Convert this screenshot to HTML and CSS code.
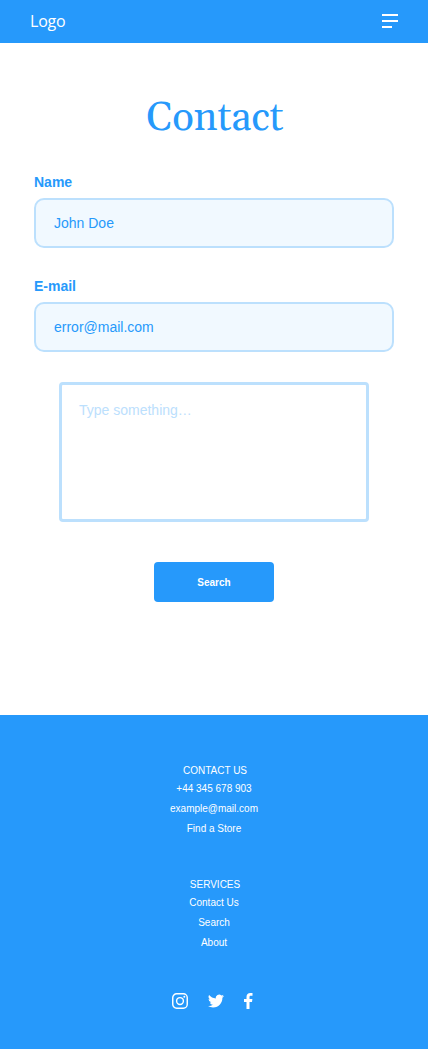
FILE: index.html
```html
<!DOCTYPE html>
<html lang="en">
<head>
<meta charset="utf-8">
<title>Contact</title>
<link rel="stylesheet" href="styles.css">
</head>
<body>
<header class="header">
  <a class="logo">Logo</a>
  <svg class="menu" width="16" height="14" viewBox="0 0 16 14" fill="#fff"><path d="M0 0h16v2H0zM0 6h16v2H0zM0 12h10v2H0z"/></svg>
</header>
<main class="main">
  <h1 class="title">Contact</h1>
  <form class="form">
    <label class="label" for="name">Name</label>
    <input class="input" id="name" type="text" value="John Doe">
    <label class="label" for="email">E-mail</label>
    <input class="input" id="email" type="text" value="error@mail.com">
    <textarea class="message" placeholder="Type something…"></textarea>
    <button class="button" type="button">Search</button>
  </form>
</main>
<footer class="footer">
  <section class="group">
    <h2 class="heading">CONTACT US</h2>
    <p class="item">+44 345 678 903</p>
    <p class="item">example@mail.com</p>
    <p class="item">Find a Store</p>
  </section>
  <section class="group">
    <h2 class="heading">SERVICES</h2>
    <p class="item">Contact Us</p>
    <p class="item">Search</p>
    <p class="item">About</p>
  </section>
  <div class="social">
    <svg width="16" height="16" viewBox="0 0 16 16" fill="none" stroke="#fff" stroke-width="1.45"><rect x=".75" y=".75" width="14.5" height="14.5" rx="3.9"/><circle cx="8" cy="8" r="3.4"/><circle cx="12.3" cy="3.7" r="1" fill="#fff" stroke="none"/></svg>
    <svg width="16" height="16" viewBox="0 0 24 24" fill="#fff"><path d="M23.95 4.57a10 10 0 0 1-2.82.77 4.96 4.96 0 0 0 2.16-2.72c-.95.55-2 .95-3.13 1.18a4.92 4.92 0 0 0-8.38 4.48C7.69 8.1 4.07 6.13 1.64 3.16a4.92 4.92 0 0 0 1.52 6.57 4.9 4.9 0 0 1-2.23-.61v.06a4.92 4.92 0 0 0 3.95 4.83 5 5 0 0 1-2.21.08 4.94 4.94 0 0 0 4.6 3.42A9.87 9.87 0 0 1 0 19.54a13.99 13.99 0 0 0 7.56 2.21c9.05 0 14-7.5 14-13.98 0-.21 0-.42-.02-.63a9.94 9.94 0 0 0 2.46-2.55z"/></svg>
    <svg width="9" height="16" viewBox="0 0 9 16" fill="#fff"><path d="M2.500 16V8.900H0V6.100h2.500V3.900C2.500 1.400 4 0 6.300 0c1 0 1.900.1 2.200.1v2.600H6.900c-1.200 0-1.400.6-1.400 1.400v2h2.900L8 8.900H5.500V16z"/></svg>
  </div>
</footer>
</body>
</html>
```

FILE: styles.css
```css
* { box-sizing: border-box; }
body { margin: 0; min-height: 1049px; display: flex; flex-direction: column; background: #fff; color: #2699fb; font-family: "Liberation Sans", Arial, sans-serif; }
.header { height: 43px; padding: 0 30px 1px; display: flex; align-items: center; justify-content: space-between; background: #2699fb; }
.logo { font: 16px/22px "Open Sans", sans-serif; letter-spacing: -.2px; color: #fff; }
.menu { display: block; }
.main { height: 672px; padding: 51px 34px 0; }
.title { margin: 0; height: 50px; padding-left: 2px; text-align: center; font: 400 40px/50px Georgia, Gelasio, "Liberation Serif", serif; }
.form { margin-top: 30px; display: flex; flex-direction: column; }
.label { height: 16px; margin-bottom: 8px; font-size: 14px; line-height: 16px; font-weight: 700; }
.input { height: 50px; width: 100%; margin: 0 0 30px; padding: 0 18px; border: 2px solid #bce0fd; border-radius: 10px; background: #f1f9ff; color: #2699fb; font: 14px "Liberation Sans", Arial, sans-serif; outline: 0; }
.message { align-self: center; width: 310px; height: 140px; padding: 17px; border: 3px solid #bce0fd; border-radius: 4px; resize: none; background: #fff; font: 14px/16px "Liberation Sans", Arial, sans-serif; }
.message::placeholder { color: #bce0fd; opacity: 1; }
.button { align-self: center; width: 120px; height: 40px; margin-top: 40px; padding: 1px 0 0; border: 0; border-radius: 4px; background: #2699fb; color: #fff; font: 700 10px "Liberation Sans", Arial, sans-serif; }
.footer { height: 334px; padding-top: 50px; background: #2699fb; color: #fff; text-align: center; }
.group { height: 114px; }
.heading, .item { margin: 0; font-size: 10px; font-weight: 400; }
.heading { height: 14px; line-height: 12px; padding-left: 2px; }
.item { line-height: 20px; }
.social { padding-right: 3px; display: flex; justify-content: center; gap: 20px; }
```
